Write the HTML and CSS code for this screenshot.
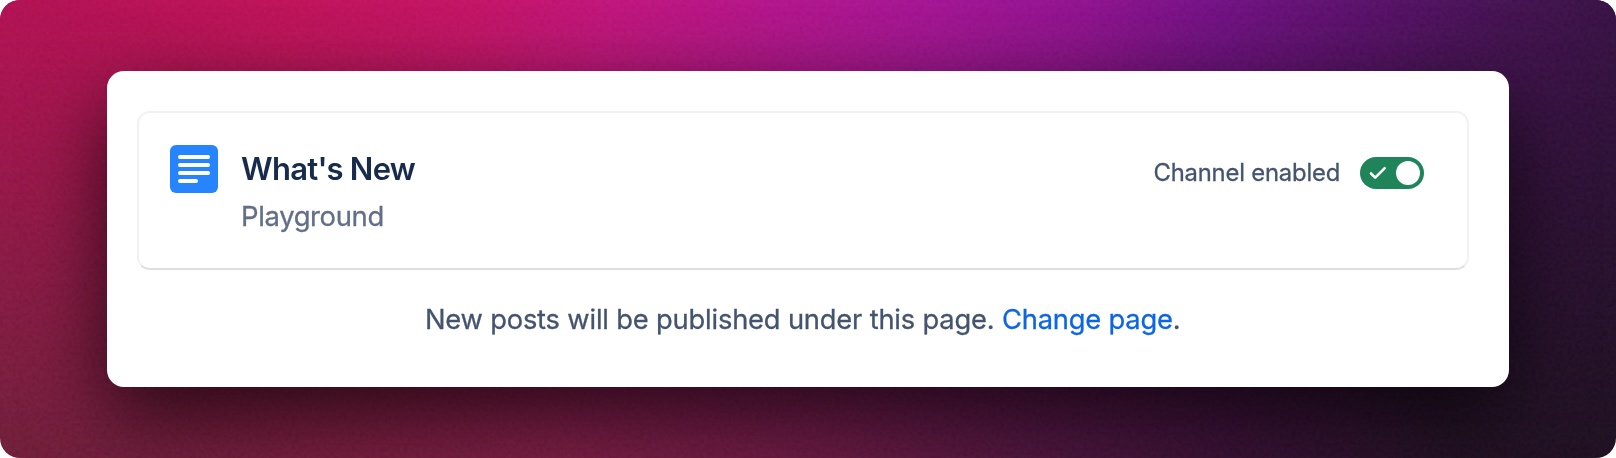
FILE: index.html
```html
<!DOCTYPE html>
<html lang="en">
<head>
<meta charset="utf-8">
<title>What's New</title>
<link rel="stylesheet" href="styles.css">
</head>
<body>
<main class="stage">
  <svg class="grain" aria-hidden="true">
    <filter id="grain" x="0" y="0" width="100%" height="100%">
      <feTurbulence type="fractalNoise" baseFrequency="0.25" numOctaves="3" seed="4"/>
      <feColorMatrix type="saturate" values="0"/>
      <feComponentTransfer><feFuncA type="linear" slope="0" intercept="1"/></feComponentTransfer>
    </filter>
    <rect width="100%" height="100%" filter="url(#grain)"/>
  </svg>
  <section class="panel">
    <article class="channel">
      <svg class="page-icon" viewBox="0 0 48 48" aria-hidden="true">
        <rect width="48" height="48" rx="6" fill="#2684ff"/>
        <path d="M10 12H38M10 20H38M10 28H38M10 36H26" stroke="#fff" stroke-width="4" stroke-linecap="round"/>
      </svg>
      <div class="details">
        <h1 class="title">What's New</h1>
        <p class="space">Playground</p>
      </div>
      <div class="status">
        <span class="status-label">Channel enabled</span>
        <span class="toggle" role="switch" aria-checked="true">
          <svg class="check" viewBox="0 0 18 14" aria-hidden="true"><path d="M2 7.5L6.2 11.7L15.7 2.2" fill="none" stroke="#fff" stroke-width="2.6" stroke-linecap="round" stroke-linejoin="round"/></svg>
          <span class="knob"></span>
        </span>
      </div>
    </article>
    <p class="hint">New posts will be published under this page. <a class="link" href="#">Change page</a>.</p>
  </section>
</main>
</body>
</html>
```
FILE: styles.css
```css
* { box-sizing: border-box; }

body {
  margin: 0;
  background: #fff;
  font-family: Inter, "Liberation Sans", sans-serif;
}

.stage {
  position: relative;
  height: 458px;
  padding: 71px 106.6px;
  border-radius: 20px;
  overflow: hidden;
  background: linear-gradient(90deg, #6b1c36 0%, #751b3a 22%, #781b40 35%, #68183e 50%, #4b1439 64%, #351030 76%, #1f1020 90%, #1c0f1e 100%);
}

.stage::before {
  content: "";
  position: absolute;
  inset: 0;
  background: linear-gradient(100deg, #b0104f 3%, #bd1155 17%, #c21262 28%, #be1378 36%, #b01389 46%, #a11391 55%, #8d118c 64%, #6e1080 72%, #571068 80%, #40114d 89%, #2c1038 100%);
  mask-image: linear-gradient(180deg, #000 0%, rgba(0, 0, 0, .85) 15%, rgba(0, 0, 0, .4) 55%, transparent 100%);
}

.grain {
  position: absolute;
  inset: 0;
  width: 100%;
  height: 100%;
  opacity: .2;
  mix-blend-mode: soft-light;
}

.panel {
  position: relative;
  width: 1402.5px;
  height: 315.5px;
  padding: 40px 40.5px 0 30.2px;
  border-radius: 17px;
  background: #fff;
  box-shadow: 0 30px 80px rgba(0, 0, 0, .7);
}

.channel {
  display: flex;
  height: 159px;
  padding: 31.5px 43px 0 31px;
  border: 2px solid #f1f1f1;
  border-bottom-color: #dfdfdf;
  border-radius: 13px;
}

.page-icon { width: 48px; height: 48px; }

.details { margin-left: 23.3px; }

.title {
  margin: 5.5px 0 0;
  color: #172b4d;
  font-size: 31px;
  font-weight: 560;
  line-height: 38px;
  letter-spacing: -.76px;
}

.space {
  margin: 10px 0 0;
  color: #626f86;
  font-size: 27.5px;
  line-height: 36px;
  letter-spacing: -.4px;
  -webkit-text-stroke: .3px currentColor;
}

.status {
  display: flex;
  align-items: center;
  gap: 20px;
  height: 32px;
  margin: 12px 0 0 auto;
}

.status-label {
  padding-top: 1px;
  color: #44546f;
  font-size: 23.8px;
  line-height: 32px;
  letter-spacing: -.18px;
  -webkit-text-stroke: .3px currentColor;
}

.toggle {
  display: flex;
  align-items: center;
  justify-content: space-between;
  width: 63.5px;
  height: 32px;
  padding: 0 4px 0 9px;
  border-radius: 16px;
  background: #1f845a;
}

.check { width: 18px; height: 14px; }

.knob {
  width: 24px;
  height: 24px;
  border-radius: 50%;
  background: #fff;
}

.hint {
  margin: 30px 0 0;
  color: #44546f;
  font-size: 27.3px;
  line-height: 40px;
  letter-spacing: -.18px;
  text-align: center;
  -webkit-text-stroke: .3px currentColor;
}

.link { color: #0c66e4; text-decoration: none; }
```
